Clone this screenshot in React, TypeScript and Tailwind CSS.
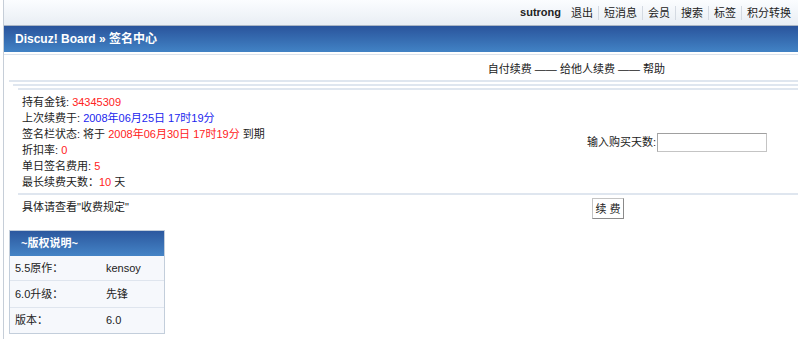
import React from "react";

const font = {
  fontFamily: '"Liberation Sans", "Noto Sans CJK SC", sans-serif',
};

export default function App() {
  const nav = ["退出", "短消息", "会员", "搜索", "标签", "积分转换"];
  return (
    <div className="h-[339px] w-[798px] overflow-hidden bg-white text-[11px] text-[#222]" style={font}>
      <div className="ml-[3px] h-full border-l border-[#c6ced8]">
        {/* top nav */}
        <div className="flex h-[25px] items-center justify-end bg-gradient-to-b from-[#fbfdff] to-[#e9eef4] pr-[2px]">
          <span className="mr-[10px] font-bold text-[#222]">sutrong</span>
          {nav.map((n, i) => (
            <span
              key={n}
              className={
                i === 0
                  ? "pr-[5px] leading-[14px]"
                  : "border-l border-[#d4dae2] px-[5px] leading-[14px]"
              }
            >
              {n}
            </span>
          ))}
        </div>

        {/* breadcrumb bar */}
        <div className="h-[27px] border-t border-[#aab6c5] bg-gradient-to-b from-[#2a549c] to-[#4283c5] pl-[11px] text-[12px] font-bold leading-[26px] text-white">
          Discuz! Board » 签名中心
        </div>
        <div className="h-[3px] border-b border-[#dce3ec]" />

        <div className="pl-[5px]">
          {/* tabs row */}
          <div className="flex h-[27px] items-center justify-end border-b-2 border-[#dfe6ef] pr-[133px] pt-[3px]">
            <span>自付续费 —— 给他人续费 —— 帮助</span>
          </div>
          <div className="ml-[4px] mt-[2px] border-b-2 border-[#dfe6ef]" />
          <div className="ml-[9px] mt-[2px] border-b-2 border-[#dfe6ef]" />

          {/* main form */}
          <div className="ml-[9px]">
            <div className="flex items-center border-b-2 border-[#dfe6ef] pb-[3px] pt-[4px]">
              <div className="w-[569px] pl-[4px] leading-[16px]">
                <div>
                  持有金钱: <span className="text-[#f22]">34345309</span>
                </div>
                <div>
                  上次续费于: <span className="text-[#1b25ee]">2008年06月25日 17时19分</span>
                </div>
                <div>
                  签名栏状态: 将于 <span className="text-[#f22]">2008年06月30日 17时19分</span> 到期
                </div>
                <div>
                  折扣率: <span className="text-[#f22]">0</span>
                </div>
                <div>
                  单日签名费用: <span className="text-[#f22]">5</span>
                </div>
                <div>
                  最长续费天数：<span className="text-[#f22]">10</span> 天
                </div>
              </div>
              <div className="flex items-center">
                <span>输入购买天数:</span>
                <input className="ml-[1px] h-[19px] w-[110px] border border-[#c4c4c4] border-l-[#a8a8a8] border-t-[#a0a0a0] bg-white outline-none" />
              </div>
            </div>
            <div className="flex h-[25px] items-center">
              <div className="w-[574px] pl-[4px]">具体请查看"收费规定"</div>
              <button className="mt-[2px] h-[21px] w-[32px] border border-[#c4c4c4] border-b-[#8a8a8a] border-r-[#8a8a8a] bg-white text-[11px] leading-[18px]">
                续 费
              </button>
            </div>
          </div>

          {/* copyright box */}
          <div className="mt-[10px] w-[156px] border border-[#c3cedb] bg-[#f6f8fc]">
            <div className="h-[25px] bg-gradient-to-b from-[#2c589f] to-[#4584c6] pl-[11px] font-bold leading-[25px] text-white">
              ~版权说明~
            </div>
            {[
              ["5.5原作：", "kensoy", "h-[24px]"],
              ["6.0升级：", "先锋", "h-[27px]"],
              ["版本：", "6.0", "h-[26px]"],
            ].map(([a, b, h], i) => (
              <div
                key={a}
                className={
                  "flex items-center " + h + (i > 0 ? " border-t border-[#dfe5ee]" : "")
                }
              >
                <span className="w-[96px] pl-[5px]">{a}</span>
                <span>{b}</span>
              </div>
            ))}
          </div>
        </div>
      </div>
    </div>
  );
}
